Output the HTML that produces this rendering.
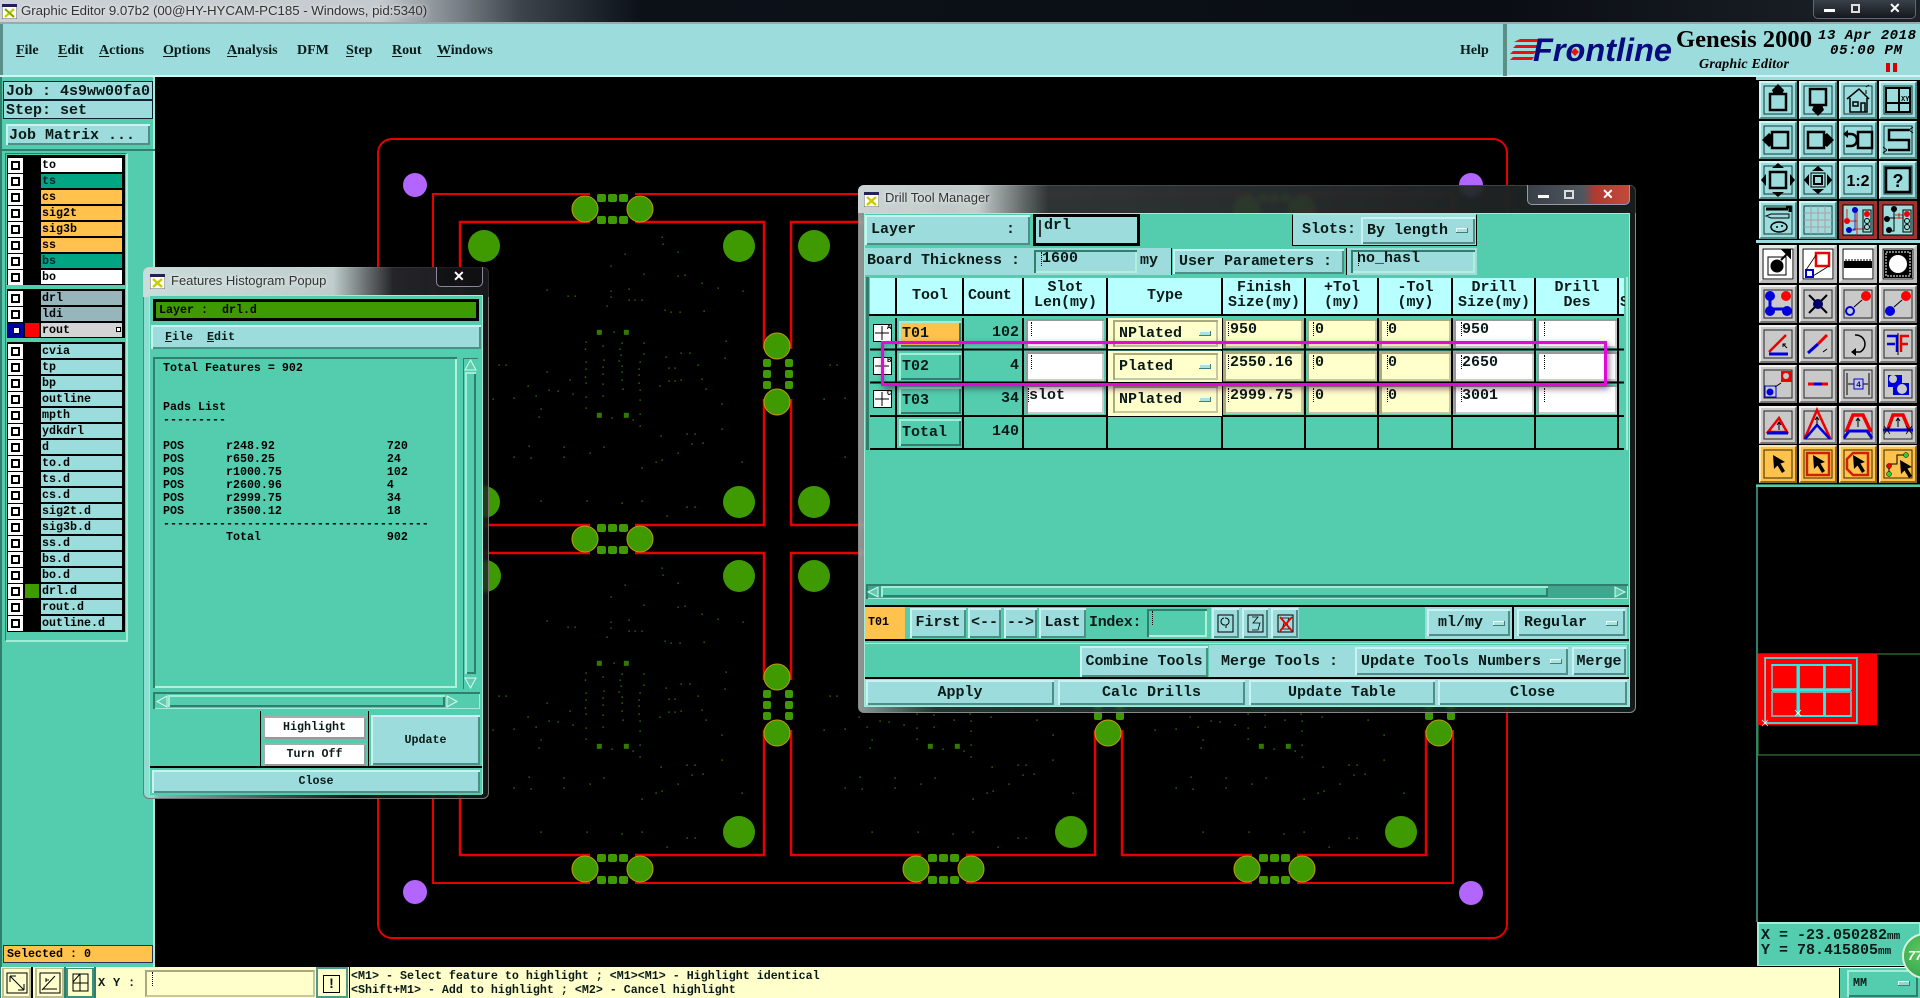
<!DOCTYPE html>
<html><head><meta charset="utf-8"><title>Graphic Editor</title>
<style>
html,body{margin:0;padding:0;background:#000;width:1920px;height:998px;overflow:hidden}
*,*::after{box-sizing:border-box}
.a{position:absolute;white-space:pre}
body{font:bold 11.67px/14px "Liberation Mono",monospace;color:#0a1a18}
.m{font:bold 15px/16px "Liberation Mono",monospace}
.c{text-align:center}
.t{background:#53cdae}
.l{background:#9ddcdc}
.b{background:#9ddcdc;box-shadow:inset 2px 2px 0 #c9f3f3,inset -2px -2px 0 #4d8f86}
.bt{background:#53cdae;box-shadow:inset 2px 2px 0 #a5ecd8,inset -2px -2px 0 #2f7f6c}
.sink{box-shadow:inset 2px 2px 0 #2f7f6c,inset -2px -2px 0 #b0f0dc}
.i{background:#fff;box-shadow:inset 2px 2px 0 #999,inset -2px -2px 0 #ccc}
.y{background:#ffffcc;box-shadow:inset 2px 2px 0 #aaa980,inset -2px -2px 0 #c8c8a0}
.menu{font:bold 14px/18px "Liberation Serif",serif;top:42px;color:#061a18}
.menu u{text-underline-offset:2px}
.ck{width:15px;height:15px;background:#fff;left:8px}
.ck:after{content:"";position:absolute;left:3px;top:3px;width:9px;height:9px;border:2px solid #000}
.n{left:41px;width:81px;height:14px;padding-left:1px;background:#9ddcdc;line-height:15px;color:#000}
.tg{font:13px/16px "Liberation Sans",sans-serif;color:#333;text-shadow:0 0 5px #fff}
.cur{width:1px;height:14px;border-left:1px dotted #000}
.mb{width:12px;height:5px;background:#a9e4dc;box-shadow:inset -1px -1px 0 #3f7f78,inset 1px 1px 0 #eaffff}
</style></head><body>

<!-- PCB canvas -->
<svg class="a" style="left:0;top:0" width="1920" height="998" viewBox="0 0 1920 998">
<defs>
<g id="dots" fill="#3f9900" stroke="#000" stroke-width="1" opacity=".8" transform="translate(360 120) scale(.3333)">
<path d="M904 349h5v5h-5zM907 370h5v5h-5zM952 394h5v5h-5zM793 400h5v5h-5zM751 436h5v5h-5zM850 460h5v5h-5zM952 466h5v5h-5zM973 463h5v5h-5zM1024 487h5v5h-5zM1072 502h5v5h-5zM1147 511h5v5h-5zM559 508h5v5h-5zM622 526h5v5h-5zM643 526h5v5h-5zM805 505h5v5h-5zM751 511h5v5h-5zM751 529h5v5h-5zM805 538h5v5h-5zM823 538h5v5h-5zM844 538h5v5h-5zM739 556h5v5h-5zM913 568h5v5h-5zM931 574h5v5h-5zM958 574h5v5h-5zM1030 571h5v5h-5zM415 733h5v5h-5zM436 733h5v5h-5zM397 835h5v5h-5zM460 832h5v5h-5zM502 796h5v5h-5zM526 826h5v5h-5zM541 865h5v5h-5zM535 889h5v5h-5zM559 754h5v5h-5zM565 808h5v5h-5zM592 811h5v5h-5zM628 778h5v5h-5zM637 820h5v5h-5zM676 664h5v5h-5zM674 685h5v5h-5zM676 724h5v5h-5zM676 745h5v5h-5zM674 769h5v5h-5zM676 787h5v5h-5zM676 829h5v5h-5zM676 862h5v5h-5zM727 676h5v5h-5zM730 718h5v5h-5zM727 739h5v5h-5zM727 760h5v5h-5zM727 790h5v5h-5zM727 826h5v5h-5zM784 667h5v5h-5zM778 685h5v5h-5zM781 703h5v5h-5zM775 721h5v5h-5zM784 736h5v5h-5zM784 754h5v5h-5zM784 778h5v5h-5zM787 805h5v5h-5zM850 667h5v5h-5zM850 700h5v5h-5zM838 724h5v5h-5zM835 745h5v5h-5zM835 763h5v5h-5zM835 787h5v5h-5zM838 808h5v5h-5zM838 838h5v5h-5zM838 880h5v5h-5zM838 916h5v5h-5zM817 898h5v5h-5zM760 634h5v5h-5zM754 892h5v5h-5zM1096 661h5v5h-5zM1093 712h5v5h-5zM916 709h5v5h-5zM961 697h5v5h-5zM988 697h5v5h-5zM925 742h5v5h-5zM943 742h5v5h-5zM1012 733h5v5h-5zM925 781h5v5h-5zM943 781h5v5h-5zM961 778h5v5h-5zM898 796h5v5h-5zM1024 775h5v5h-5zM1036 805h5v5h-5zM1084 850h5v5h-5zM1084 925h5v5h-5zM901 946h5v5h-5zM979 940h5v5h-5zM1003 940h5v5h-5zM994 970h5v5h-5zM1027 967h5v5h-5zM952 997h5v5h-5zM904 1018h5v5h-5zM886 1024h5v5h-5zM844 1042h5v5h-5zM505 976h5v5h-5zM610 979h5v5h-5zM730 979h5v5h-5zM688 997h5v5h-5zM460 1009h5v5h-5zM511 1012h5v5h-5zM610 1009h5v5h-5zM1144 1024h5v5h-5zM541 1141h5v5h-5zM679 1141h5v5h-5zM784 1147h5v5h-5zM844 1141h5v5h-5zM979 1159h5v5h-5zM1003 1159h5v5h-5zM919 1186h5v5h-5zM710 629h16v16h-16zM791 629h16v16h-16zM710 878h16v16h-16zM791 878h16v16h-16z"/>
</g>
<g id="ht">
<g fill="#3f9900">
<rect x="-10" y="-15" width="9" height="8" rx="2"/><rect x="1" y="-15" width="9" height="8" rx="2"/><rect x="12" y="-15" width="9" height="8" rx="2"/>
<rect x="-10" y="7" width="9" height="8" rx="2"/><rect x="1" y="7" width="9" height="8" rx="2"/><rect x="12" y="7" width="9" height="8" rx="2"/>
<circle cx="-22" cy="0" r="13" stroke="#c49a10" stroke-width="1"/><circle cx="33" cy="0" r="13" stroke="#c49a10" stroke-width="1"/>
</g>
</g>
<g id="vt">
<g fill="#3f9900">
<rect x="-14" y="-9" width="8" height="8" rx="2"/><rect x="-14" y="2" width="8" height="8" rx="2"/><rect x="-14" y="13" width="8" height="8" rx="2"/>
<rect x="8" y="-9" width="8" height="8" rx="2"/><rect x="8" y="2" width="8" height="8" rx="2"/><rect x="8" y="13" width="8" height="8" rx="2"/>
<circle cx="0" cy="-22" r="13" stroke="#c49a10" stroke-width="1"/><circle cx="0" cy="34" r="13" stroke="#c49a10" stroke-width="1"/>
</g>
</g>
</defs>
<use href="#dots"/><use href="#dots" x="331"/><use href="#dots" x="662"/>
<use href="#dots" y="331"/><use href="#dots" x="331" y="331"/><use href="#dots" x="662" y="331"/>
<g fill="none" stroke="#e60000">
<rect x="378" y="139" width="1129" height="799" rx="14" stroke-width="2"/>
<path stroke-width="2" d="M433 194V883H1453V194z"/>
<g stroke-width="2.5">
<path d="M460 525V222H764V525zM791 525V222H1095V525zM1122 525V222H1426V525z"/>
<path d="M460 553V855H764V553zM791 553V855H1095V553zM1122 553V855H1426V553z"/>
</g>
</g>
<g fill="#000">
<rect x="590" y="190" width="45" height="36"/><rect x="590" y="520" width="45" height="38"/><rect x="590" y="851" width="45" height="36"/>
<rect x="921" y="190" width="45" height="36"/><rect x="921" y="520" width="45" height="38"/><rect x="921" y="851" width="45" height="36"/>
<rect x="1252" y="190" width="45" height="36"/><rect x="1252" y="520" width="45" height="38"/><rect x="1252" y="851" width="45" height="36"/>
<rect x="759" y="349" width="37" height="50"/><rect x="759" y="680" width="37" height="50"/>
<rect x="1090" y="349" width="37" height="50"/><rect x="1090" y="680" width="37" height="50"/>
<rect x="1421" y="680" width="37" height="50"/><rect x="1421" y="349" width="37" height="50"/>
</g>
<use href="#ht" x="607" y="209"/><use href="#ht" x="607" y="539"/><use href="#ht" x="607" y="869"/>
<use href="#ht" x="938" y="209"/><use href="#ht" x="938" y="539"/><use href="#ht" x="938" y="869"/>
<use href="#ht" x="1269" y="209"/><use href="#ht" x="1269" y="539"/><use href="#ht" x="1269" y="869"/>
<use href="#vt" x="777" y="368"/><use href="#vt" x="777" y="699"/>
<use href="#vt" x="1108" y="368"/><use href="#vt" x="1108" y="699"/>
<use href="#vt" x="1439" y="368"/><use href="#vt" x="1439" y="699"/>
<g fill="#3f9900">
<circle cx="484" cy="246" r="16"/><circle cx="739" cy="246" r="16"/><circle cx="484" cy="502" r="16"/><circle cx="739" cy="502" r="16"/>
<circle cx="814" cy="246" r="16"/><circle cx="1070" cy="246" r="16"/><circle cx="814" cy="502" r="16"/><circle cx="1070" cy="502" r="16"/>
<circle cx="1145" cy="246" r="16"/><circle cx="1400" cy="246" r="16"/><circle cx="1145" cy="502" r="16"/><circle cx="1400" cy="502" r="16"/>
<circle cx="485" cy="576" r="16"/><circle cx="739" cy="576" r="16"/><circle cx="739" cy="832" r="16"/>
<circle cx="814" cy="576" r="16"/><circle cx="1071" cy="576" r="16"/><circle cx="1071" cy="832" r="16"/>
<circle cx="1145" cy="576" r="16"/><circle cx="1401" cy="576" r="16"/><circle cx="1401" cy="832" r="16"/>
</g>
<g fill="#b266ff"><circle cx="415" cy="185" r="12"/><circle cx="415" cy="892" r="12"/><circle cx="1471" cy="185" r="12"/><circle cx="1471" cy="893" r="12"/></g>
</svg>

<!-- Title bar -->
<div class="a" style="left:0;top:0;width:1920px;height:22px;background:linear-gradient(90deg,#ccd2d6 0,#c4cace 380px,#3c444c 520px,#0c1118 640px,#0a0e14 1500px,#1c2228 1900px)"></div>
<svg class="a" style="left:2px;top:4px" width="15" height="15"><rect width="15" height="15" fill="#fff" stroke="#555"/><rect width="15" height="3" fill="#225"/><path d="M3 5l9 8M12 5l-9 8" stroke="#cc0" stroke-width="2.5"/><path d="M3 5l9 8" stroke="#393" stroke-width="1"/></svg>
<div class="a tg" style="left:21px;top:3px;font-size:13.3px;letter-spacing:-.05px">Graphic Editor 9.07b2 (00@HY-HYCAM-PC185 - Windows, pid:5340)</div>
<div class="a" style="left:1813px;top:0;width:103px;height:19px;border:1px solid #667;border-top:0;border-radius:0 0 5px 5px;background:linear-gradient(#3a4048,#14181e)"></div>
<div class="a" style="left:1824px;top:9px;width:11px;height:3px;background:#fff"></div>
<div class="a" style="left:1851px;top:4px;width:9px;height:9px;border:2px solid #ddd"></div>
<div class="a" style="left:1889px;top:-1px;font:bold 14px/18px 'Liberation Sans',sans-serif;color:#fff">✕</div>

<!-- Menu bar -->
<div class="a l" style="left:0;top:22px;width:1920px;height:55px;border-top:2px solid #9aa;box-shadow:inset 3px 0 0 #5a8f8a;border-bottom:2px solid #d0f5f5"></div>
<div class="a menu" style="left:16px"><u>F</u>ile</div>
<div class="a menu" style="left:58px"><u>E</u>dit</div>
<div class="a menu" style="left:99px"><u>A</u>ctions</div>
<div class="a menu" style="left:163px"><u>O</u>ptions</div>
<div class="a menu" style="left:227px"><u>A</u>nalysis</div>
<div class="a menu" style="left:297px">DFM</div>
<div class="a menu" style="left:346px"><u>S</u>tep</div>
<div class="a menu" style="left:392px"><u>R</u>out</div>
<div class="a menu" style="left:437px"><u>W</u>indows</div>
<div class="a menu" style="left:1460px">Help</div>
<div class="a" style="left:1503px;top:24px;width:4px;height:52px;background:#5a8f8a"></div>

<!-- Logo -->
<svg class="a" style="left:1508px;top:24px" width="412" height="52">
<g fill="#e81010"><path d="M12 15h20l-2 3H6zM8 21h22l-2 3H5zM5 27h23l-2 3H2zM5 33h21l-2 3H2z"/></g>
<text x="25" y="37" font-family="Liberation Sans" font-weight="bold" font-style="italic" font-size="32" fill="#0a0a80" textLength="139" lengthAdjust="spacingAndGlyphs">Frontline</text>
<path d="M67 24l4 4-4 4-4-4z" fill="#e81010"/>
<text x="168" y="23" font-family="Liberation Serif" font-weight="bold" font-size="24" fill="#000" textLength="136" lengthAdjust="spacingAndGlyphs">Genesis 2000</text>
<text x="191" y="44" font-family="Liberation Serif" font-weight="bold" font-style="italic" font-size="14" fill="#000" textLength="90">Graphic Editor</text>
<text x="310" y="15" font-family="Liberation Mono" font-weight="bold" font-style="italic" font-size="14" fill="#000" textLength="98">13 Apr 2018</text>
<text x="322" y="30" font-family="Liberation Mono" font-weight="bold" font-style="italic" font-size="14" fill="#000" textLength="72">05:00 PM</text>
<rect x="378" y="39" width="4" height="9" fill="#d00"/><rect x="385" y="39" width="4" height="9" fill="#d00"/>
</svg>

<!-- Left panel -->
<div class="a t" style="left:0;top:77px;width:155px;height:890px;box-shadow:inset 2px 0 0 #2f7f6c,inset -2px 0 0 #a5ecd8"></div>
<div class="a l m" style="left:3px;top:81px;width:150px;height:19px;border:1px solid #123;border-width:1px;padding-left:2px;line-height:19px">Job : 4s9ww00fa0</div>
<div class="a l m" style="left:3px;top:100px;width:150px;height:19px;border:1px solid #123;padding-left:2px;line-height:19px">Step: set</div>
<div class="a b m" style="left:6px;top:124px;width:144px;height:21px;padding-left:3px;line-height:23px">Job Matrix ...</div>
<div class="a" style="left:0;top:149px;width:155px;height:2px;background:#2f7f6c"></div>
<div class="a" style="left:5px;top:153px;width:123px;height:489px;border:1px solid #2f7f6c;border-right:2px solid #a5ecd8;border-bottom:2px solid #a5ecd8"></div>
<div class="a" style="left:7px;top:155px;width:118px;height:477px;background:#000"></div>
<div class="a t" style="left:7px;top:285px;width:118px;height:4px"></div>
<div class="a t" style="left:7px;top:338px;width:118px;height:4px"></div>

<div class="a ck" style="top:158px"></div><div class="a n" style="top:158px;background:#fff">to</div>
<div class="a ck" style="top:174px"></div><div class="a n" style="top:174px;background:#00a583;color:#023">ts</div>
<div class="a ck" style="top:190px"></div><div class="a n" style="top:190px;background:#ffc34d">cs</div>
<div class="a ck" style="top:206px"></div><div class="a n" style="top:206px;background:#ffc34d">sig2t</div>
<div class="a ck" style="top:222px"></div><div class="a n" style="top:222px;background:#ffc34d">sig3b</div>
<div class="a ck" style="top:238px"></div><div class="a n" style="top:238px;background:#ffc34d">ss</div>
<div class="a ck" style="top:254px"></div><div class="a n" style="top:254px;background:#00a583;color:#023">bs</div>
<div class="a ck" style="top:270px"></div><div class="a n" style="top:270px;background:#fff">bo</div>
<div class="a ck" style="top:291px"></div><div class="a n" style="top:291px;background:#97b6bc">drl</div>
<div class="a ck" style="top:307px"></div><div class="a n" style="top:307px;background:#97b6bc">ldi</div>
<div class="a" style="left:8px;top:323px;width:15px;height:15px;background:#0000a0"></div>
<div class="a" style="left:13px;top:327px;width:7px;height:7px;background:#fff;border:1px solid #000"></div>
<div class="a" style="left:25px;top:323px;width:14px;height:14px;background:#f00"></div>
<div class="a n" style="top:323px;background:#d4d4d4">rout</div>
<div class="a" style="left:116px;top:327px;width:5px;height:5px;border:1px solid #000;background:#fff"></div>
<div class="a ck" style="top:344px"></div><div class="a n" style="top:344px">cvia</div>
<div class="a ck" style="top:360px"></div><div class="a n" style="top:360px">tp</div>
<div class="a ck" style="top:376px"></div><div class="a n" style="top:376px">bp</div>
<div class="a ck" style="top:392px"></div><div class="a n" style="top:392px">outline</div>
<div class="a ck" style="top:408px"></div><div class="a n" style="top:408px">mpth</div>
<div class="a ck" style="top:424px"></div><div class="a n" style="top:424px">ydkdrl</div>
<div class="a ck" style="top:440px"></div><div class="a n" style="top:440px">d</div>
<div class="a ck" style="top:456px"></div><div class="a n" style="top:456px">to.d</div>
<div class="a ck" style="top:472px"></div><div class="a n" style="top:472px">ts.d</div>
<div class="a ck" style="top:488px"></div><div class="a n" style="top:488px">cs.d</div>
<div class="a ck" style="top:504px"></div><div class="a n" style="top:504px">sig2t.d</div>
<div class="a ck" style="top:520px"></div><div class="a n" style="top:520px">sig3b.d</div>
<div class="a ck" style="top:536px"></div><div class="a n" style="top:536px">ss.d</div>
<div class="a ck" style="top:552px"></div><div class="a n" style="top:552px">bs.d</div>
<div class="a ck" style="top:568px"></div><div class="a n" style="top:568px">bo.d</div>
<div class="a ck" style="top:584px"></div><div class="a" style="left:25px;top:584px;width:14px;height:14px;background:#3f9900"></div><div class="a n" style="top:584px">drl.d</div>
<div class="a ck" style="top:600px"></div><div class="a n" style="top:600px">rout.d</div>
<div class="a ck" style="top:616px"></div><div class="a n" style="top:616px">outline.d</div>

<div class="a" style="left:3px;top:945px;width:150px;height:18px;background:#ffc34d;border:1px solid #235;line-height:17px;padding-left:3px;color:#000">Selected : 0</div>

<!-- Bottom bar -->
<div class="a" style="left:0;top:967px;width:1920px;height:31px;background:#ffffcc"></div>
<div class="a" style="left:0;top:967px;width:1px;height:31px;background:#2f7f6c"></div>
<div class="a" style="left:31px;top:967px;width:2px;height:31px;background:#000"></div>
<div class="a" style="left:64px;top:967px;width:2px;height:31px;background:#2f7f6c"></div>
<div class="a" style="left:94px;top:967px;width:2px;height:31px;background:#2f7f6c"></div>
<svg class="a" style="left:2px;top:968px" width="92" height="30" fill="none" stroke="#000">
<rect x="1" y="0" width="27" height="29" stroke="#bdbd90" stroke-width="2"/><rect x="5" y="5" width="20" height="20"/><path d="M8 8l14 14M8 8v6M8 8h6M22 22v-6M22 22h-6"/>
<rect x="34" y="0" width="27" height="29" stroke="#bdbd90" stroke-width="2"/><rect x="38" y="5" width="20" height="20"/><path d="M40 22l13-14M41 21h14M44 12h3M44 10v4"/>
<rect x="65" y="0" width="26" height="29" stroke="#3f8f7c" stroke-width="2" /><rect x="71" y="6" width="15" height="17"/><path d="M71 15h15M78 6v17M71 14l7-8"/>
</svg>
<div class="a" style="left:98px;top:976px;font-size:12px;letter-spacing:.3px">X Y :</div>
<div class="a" style="left:145px;top:970px;width:170px;height:27px;border:2px solid #aaa980;border-right-color:#c8c8a0;border-bottom-color:#c8c8a0"></div>
<div class="a cur" style="left:152px;top:972px"></div>
<div class="a" style="left:316px;top:967px;width:32px;height:31px;background:#ffffcc;border:2px solid #4d9a88"></div>
<div class="a" style="left:323px;top:975px;width:17px;height:18px;border:1.5px solid #000;text-align:center;font:bold 14px/15px 'Liberation Sans',sans-serif">!</div>
<div class="a" style="left:349px;top:967px;width:1px;height:31px;background:#000"></div>
<div class="a" style="left:351px;top:970px;line-height:13.5px">&lt;M1&gt; - Select feature to highlight ; &lt;M1&gt;&lt;M1&gt; - Highlight identical
&lt;Shift+M1&gt; - Add to highlight ; &lt;M2&gt; - Cancel highlight</div>
<div class="a t" style="left:1839px;top:968px;width:81px;height:30px;border-left:1px solid #000"></div>
<div class="a bt" style="left:1847px;top:970px;width:71px;height:27px;padding-left:6px;line-height:27px;font-size:11.67px">MM</div>
<div class="a mb" style="left:1898px;top:981px;background:#8fd8d0"></div>

<!-- Right tool panel -->
<div class="a l" style="left:1756px;top:77px;width:164px;height:3px"></div>
<div class="a l" style="left:1756px;top:240px;width:164px;height:3px"></div>
<svg class="a" style="left:1757px;top:79px" width="163" height="410" viewBox="1757 79 163 410">
<defs>
<g id="tb"><rect width="38" height="38" fill="#9ddcdc"/><path d="M0 38V0H38l-2 2H2V36z" fill="#d0f5f5"/><path d="M38 0V38H0l2-2H36V2z" fill="#4f8a88"/><rect x="5" y="5" width="28" height="28" fill="none" stroke="#0a3a3a"/></g>
<g id="wb"><rect width="38" height="38" fill="#fff"/><path d="M0 38V0H38l-2 3H3V35z" fill="#e8e8e8"/><path d="M38 0V38H0l3-3H35V3z" fill="#bbb"/><rect x="4" y="4" width="30" height="30" fill="#fff" stroke="#000"/></g>
<g id="gb"><rect width="38" height="38" fill="#c9c9c9"/><path d="M0 38V0H38l-2 2H2V36z" fill="#f0f0f0"/><path d="M38 0V38H0l2-2H36V2z" fill="#767676"/><rect x="5" y="5" width="28" height="28" fill="none" stroke="#222"/></g>
<g id="ob"><rect width="38" height="38" fill="#ffc34d"/><path d="M0 38V0H38l-2 2H2V36z" fill="#ffe6a8"/><path d="M38 0V38H0l2-2H36V2z" fill="#8a6a20"/><rect x="5" y="5" width="28" height="28" fill="none" stroke="#3a2a00"/></g>
<path id="arr" d="M0 0L1 14L4.500 10.500L9 18L12 16L7.500 8.500L12 7z" fill="#000"/>
</defs>

<!-- teal rows -->
<g transform="translate(1759 81)"><use href="#tb"/><rect x="11" y="13" width="16" height="16" fill="none" stroke="#000" stroke-width="2.5"/><path d="M19 3l6 6-2 5H15l-2-5z" fill="#000"/></g>
<g transform="translate(1799 81)"><use href="#tb"/><rect x="11" y="8" width="16" height="16" fill="none" stroke="#000" stroke-width="2.5"/><path d="M19 35l6-6-2-5H15l-2 5z" fill="#000"/></g>
<g transform="translate(1839 81)"><use href="#tb"/><path d="M8 18L20 8l10 10M11 17v14h17V17M14 21h5v4h-5zM22 22h4v9h-4z" fill="none" stroke="#000" stroke-width="1.5"/><path d="M27 6l3-2M27 9v4" stroke="#000"/></g>
<g transform="translate(1879 81)"><use href="#tb"/><path d="M7 7h24v24H7zM7 22h24M20 7v24" fill="none" stroke="#000" stroke-width="2"/><text x="22" y="20" font-size="7" fill="#000">XY</text></g>

<g transform="translate(1759 121)"><use href="#tb"/><rect x="13" y="11" width="16" height="16" fill="none" stroke="#000" stroke-width="2.5"/><path d="M3 19l7-7 4 3v8l-4 3z" fill="#000"/></g>
<g transform="translate(1799 121)"><use href="#tb"/><rect x="9" y="11" width="16" height="16" fill="none" stroke="#000" stroke-width="2.5"/><path d="M35 19l-7-7-4 3v8l4 3z" fill="#000"/></g>
<g transform="translate(1839 121)"><use href="#tb"/><rect x="19" y="11" width="14" height="16" fill="none" stroke="#000" stroke-width="2.5"/><path d="M6 13h6a5 5 0 0 1 0 12H7" fill="none" stroke="#000" stroke-width="2.5"/><path d="M4 13l5-4v8z" fill="#000"/></g>
<g transform="translate(1879 121)"><use href="#tb"/><path d="M30 9H10v10h20v10H9" fill="none" stroke="#000" stroke-width="2.5"/><path d="M30 9l4-3M30 9l4 3M8 29l-4-3M8 29l-4 3" stroke="#000"/></g>

<g transform="translate(1759 161)"><use href="#tb"/><rect x="11" y="11" width="16" height="16" fill="none" stroke="#000" stroke-width="2.5"/><path d="M19 2l6 5H13zM19 36l6-5H13zM2 19l5-6v12zM36 19l-5-6v12z" fill="#000"/></g>
<g transform="translate(1799 161)"><use href="#tb"/><rect x="15" y="15" width="8" height="8" fill="none" stroke="#000" stroke-width="2"/><path d="M12 12h14v14H12z" fill="none" stroke="#000"/><path d="M19 5l6 5H13zM19 33l6-5H13zM5 19l5-6v12zM33 19l-5-6v12z" fill="#000"/></g>
<g transform="translate(1839 161)"><use href="#tb"/><text x="19" y="25" text-anchor="middle" font-family="Liberation Sans" font-weight="bold" font-size="16" fill="#000">1:2</text></g>
<g transform="translate(1879 161)"><use href="#tb"/><rect x="7" y="7" width="24" height="24" fill="none" stroke="#000" stroke-width="2.5"/><text x="19" y="26" text-anchor="middle" font-family="Liberation Sans" font-weight="bold" font-size="18" fill="#000">?</text></g>

<g transform="translate(1759 201)"><use href="#tb"/><path d="M7 8h22M27 6h4v5" stroke="#000" stroke-width="3" fill="none"/><path d="M7 15l5-2h18v4H12z" fill="none" stroke="#000"/><ellipse cx="20" cy="26" rx="8" ry="5" fill="none" stroke="#000" stroke-width="1.5"/><circle cx="18" cy="26" r="1" /><circle cx="23" cy="25" r="1"/></g>
<g transform="translate(1799 201)"><use href="#tb"/><path d="M12 5v28M19 5v28M26 5v28M5 12h28M5 19h28M5 26h28" stroke="#b39ca2"/></g>
<g transform="translate(1839 201)"><rect width="38" height="38" fill="#a53030"/><rect x="4" y="4" width="30" height="30" fill="#9ddcdc" stroke="#000"/><path d="M8 8v12h10v6M8 20M18 10v24M14 28h12" fill="none" stroke="#e02020"/><path d="M16 9v20h-6" fill="none" stroke="#22c"/><circle cx="16" cy="9" r="3" fill="#00c"/><circle cx="10" cy="29" r="3" fill="#00c"/><circle cx="8" cy="20" r="3" fill="#e00"/><rect x="24" y="9" width="8" height="22" fill="none" stroke="#000"/><circle cx="28" cy="13" r="3" fill="#e00"/><circle cx="28" cy="20" r="2.5" fill="none" stroke="#000"/><circle cx="28" cy="26" r="2.5" fill="none" stroke="#000"/></g>
<g transform="translate(1879 201)"><rect width="38" height="38" fill="#a53030"/><rect x="4" y="4" width="30" height="30" fill="#9ddcdc" stroke="#000"/><path d="M15 8v22h-5M10 17h14" fill="none" stroke="#000"/><path d="M16 14h8M16 17h8M20 12v6" stroke="#e02020"/><circle cx="15" cy="8" r="3" fill="#000"/><circle cx="10" cy="29" r="3" fill="#000"/><circle cx="8" cy="18" r="3" fill="#000"/><rect x="24" y="9" width="8" height="22" fill="none" stroke="#000"/><circle cx="28" cy="13" r="3" fill="#e00"/><circle cx="28" cy="20" r="2.5" fill="none" stroke="#000"/><circle cx="28" cy="26" r="2.5" fill="none" stroke="#000"/></g>

<!-- white row -->
<g transform="translate(1759 245)"><use href="#wb"/><rect x="9" y="12" width="18" height="18" fill="none" stroke="#000"/><circle cx="18" cy="21" r="6.5" fill="#000"/><path d="M22 15l8-8M24 5h7v7z" stroke="#000" stroke-width="2"/></g>
<g transform="translate(1799 245)"><use href="#wb"/><rect x="17" y="8" width="13" height="13" fill="none" stroke="#e00" stroke-width="2.5"/><rect x="7" y="25" width="7" height="7" fill="none" stroke="#00c" stroke-width="2"/><path d="M7 25L17 10M14 31L30 21" stroke="#000" stroke-width=".8"/></g>
<g transform="translate(1839 245)"><use href="#wb"/><rect x="5" y="16" width="28" height="7" fill="#000"/><path d="M7 14v3M10 14v3M13 14v3M16 14v3M19 14v3M22 14v3M25 14v3M28 14v3M31 14v3" stroke="#000"/></g>
<g transform="translate(1879 245)"><use href="#wb"/><rect x="5" y="5" width="28" height="28" fill="#000"/><circle cx="19" cy="19" r="9" fill="#fff"/><rect x="7" y="7" width="24" height="24" fill="none" stroke="#fff" stroke-dasharray="2 1"/></g>

<!-- gray rows -->
<g transform="translate(1759 285)"><use href="#gb"/><path d="M11 10v14h18" stroke="#00d" stroke-width="3" fill="none"/><circle cx="11" cy="11" r="5" fill="#00d"/><circle cx="11" cy="26" r="5" fill="#00d"/><circle cx="28" cy="26" r="5" fill="#00d"/><circle cx="27" cy="11" r="5" fill="#f00"/></g>
<g transform="translate(1799 285)"><use href="#gb"/><path d="M10 10l18 18M28 10L10 28" stroke="#000" stroke-width="2"/><circle cx="19" cy="19" r="5" fill="#006"/></g>
<g transform="translate(1839 285)"><use href="#gb"/><circle cx="11" cy="26" r="4" fill="none" stroke="#00d" stroke-width="2"/><circle cx="27" cy="11" r="5" fill="#f00"/><path d="M15 22l8-7" stroke="#000"/></g>
<g transform="translate(1879 285)"><use href="#gb"/><circle cx="11" cy="26" r="5" fill="#00d"/><circle cx="27" cy="11" r="5" fill="#f00"/><path d="M15 22l8-7" stroke="#000"/></g>

<g transform="translate(1759 325)"><use href="#gb"/><path d="M10 27L27 10" stroke="#e00" stroke-width="2.5"/><path d="M10 29h19" stroke="#00d" stroke-width="3"/><path d="M28 23l-4-4m0 3v-3h3" stroke="#000" fill="none"/></g>
<g transform="translate(1799 325)"><use href="#gb"/><path d="M9 28l10-9" stroke="#00d" stroke-width="3"/><path d="M19 19l9-9" stroke="#e00" stroke-width="3"/><path d="M28 24l-4 3" stroke="#000"/></g>
<g transform="translate(1839 325)"><use href="#gb"/><path d="M16 10a9 9 0 0 1 5 17h-6" fill="none" stroke="#000" stroke-width="1.5"/><path d="M12 27l5-4v8z" fill="#000"/></g>
<g transform="translate(1879 325)"><use href="#gb"/><path d="M8 11h10v16M8 19h8" fill="none" stroke="#00d" stroke-width="2.5"/><path d="M30 11H22v16M22 19h7" fill="none" stroke="#e00" stroke-width="2.5" transform="translate(0 0)"/><path d="M19 8v22" stroke="#000"/></g>

<g transform="translate(1759 365)"><use href="#gb"/><rect x="6" y="21" width="11" height="11" fill="none" stroke="#00d"/><circle cx="11" cy="27" r="3.5" fill="#00d"/><rect x="22" y="6" width="11" height="11" fill="#e00"/><circle cx="27" cy="11" r="3" fill="#c9c9c9"/><path d="M16 22l6-4" stroke="#000"/></g>
<g transform="translate(1799 365)"><use href="#gb"/><path d="M9 19h20" stroke="#e00" stroke-width="3"/><path d="M15 19h8" stroke="#00d" stroke-width="3"/></g>
<g transform="translate(1839 365)"><use href="#gb"/><path d="M8 8v22M30 8v22M9 19h20" stroke="#000" fill="none"/><rect x="15" y="14" width="9" height="10" fill="#c9c9c9" stroke="#00d"/><text x="19.5" y="22" text-anchor="middle" font-size="8" fill="#00d">4</text></g>
<g transform="translate(1879 365)"><use href="#gb"/><path d="M9 10h14v8h7v12H14v-8H9z" fill="#00d"/><circle cx="14" cy="14" r="4" fill="#c9c9c9"/><circle cx="23" cy="24" r="5" fill="#c9c9c9"/></g>

<g transform="translate(1759 406)"><use href="#gb"/><path d="M9 26L20 12l8 14z" fill="none" stroke="#e00" stroke-width="2.5"/><path d="M8 27h21" stroke="#00d" stroke-width="3"/><path d="M20 17v7M18 19l2-3 2 3" stroke="#000" fill="none"/></g>
<g transform="translate(1799 406)"><use href="#gb"/><path d="M6 32L18 4l13 28" fill="none" stroke="#e00" stroke-width="2.5"/><path d="M6 33l12-14 13 14" fill="none" stroke="#00d" stroke-width="2.5"/><path d="M18 12v7M16 14l2-3 2 3" stroke="#000" fill="none"/></g>
<g transform="translate(1839 406)"><use href="#gb"/><path d="M7 26L14 9h10l8 17" fill="none" stroke="#e00" stroke-width="3.5"/><path d="M5 32l5-7h18l5 7" fill="none" stroke="#00d" stroke-width="3"/><path d="M19 13v8M17 15l2-3 2 3" stroke="#000" fill="none"/></g>
<g transform="translate(1879 406)"><use href="#gb"/><path d="M9 23L14 9h10l6 14" fill="none" stroke="#e00" stroke-width="3.5"/><path d="M4 24h30" stroke="#00d" stroke-width="3"/><path d="M5 20l6 8M11 20l-6 8M27 20l6 8M33 20l-6 8" stroke="#000" stroke-width=".8"/><path d="M19 13v8M17 15l2-3 2 3" stroke="#000" fill="none"/></g>

<!-- orange row -->
<g transform="translate(1759 445)"><use href="#ob"/><use href="#arr" x="14" y="10"/></g>
<g transform="translate(1799 445)"><use href="#ob"/><rect x="8" y="8" width="22" height="22" fill="none" stroke="#d02000" stroke-width="2.500"/><use href="#arr" x="14" y="10"/></g>
<g transform="translate(1839 445)"><use href="#ob"/><path d="M14 8h15v22H14l-6-6V14z" fill="none" stroke="#d02000" stroke-width="2.500"/><use href="#arr" x="14" y="10"/></g>
<g transform="translate(1879 445)"><use href="#ob"/><path d="M10 29V19h8V10h9" fill="none" stroke="#000"/><circle cx="10" cy="21" r="2.5" fill="#e00" stroke="#000" stroke-width=".5"/><circle cx="10" cy="29" r="2.5" fill="#3c3" stroke="#000" stroke-width=".5"/><circle cx="27" cy="10" r="2.5" fill="#3c3" stroke="#000" stroke-width=".5"/><use href="#arr" x="21" y="15"/></g>
</svg>
<div class="a t" style="left:1756px;top:484px;width:164px;height:3px;border-top:1px solid #2f7f6c"></div>

<!-- Thumbnail -->
<svg class="a" style="left:1756px;top:487px" width="164" height="436">
<g transform="translate(-1756 -487)">
<path d="M1757 487v435" stroke="#2f7f6c" stroke-width="2"/>
<path d="M1758 654H1920M1758 755H1920" stroke="#3f8f3f" stroke-width="1"/>
<path d="M1758 654V755" stroke="#3f8f3f"/>
<rect x="1758" y="654" width="119" height="71" fill="#f00"/>
<rect x="1765" y="658" width="92" height="65" fill="none" stroke="#9a9a9a" stroke-width="2"/>
<rect x="1765.5" y="658" width="91" height="65" fill="none" stroke="#2ee" stroke-width="1"/>
<g fill="none" stroke="#9a9a9a" stroke-width="2"><rect x="1772" y="665" width="26" height="24"/><rect x="1799" y="665" width="25" height="24"/><rect x="1825" y="665" width="26" height="24"/><rect x="1772" y="692" width="26" height="24"/><rect x="1799" y="692" width="25" height="24"/><rect x="1825" y="692" width="26" height="24"/></g>
<g fill="none" stroke="#2ee" stroke-width="2"><path d="M1772 665h79M1772 690h79M1798 665v51M1824 665v51M1825 692v24h26M1799 716h25"/></g>
<path d="M1798 665v51" stroke="#2ee" stroke-width="3"/>
<path d="M1762 720l6 6M1768 720l-6 6M1795 710l6 6M1801 710l-6 6" stroke="#fff" stroke-width=".8" fill="none"/>
</g>
</svg>

<!-- Coords -->
<div class="a t" style="left:1757px;top:922px;width:163px;height:44px;box-shadow:inset 2px 2px 0 #a5ecd8,inset -1px -1px 0 #a5ecd8"></div>
<div class="a m" style="left:1761px;top:928px">X = -23.050282<span style="font-size:11px">mm</span></div>
<div class="a m" style="left:1761px;top:943px">Y = 78.415805<span style="font-size:11px">mm</span></div>
<div class="a" style="left:1902px;top:933px;width:46px;height:46px;border-radius:50%;background:radial-gradient(circle at 40% 40%,#5cc85c,#2c9a4c);border:2px solid #d8f0d8"></div>
<div class="a" style="left:1908px;top:948px;color:#fff;font:italic bold 13px/16px 'Liberation Sans',sans-serif">77</div>

<!-- Features Histogram Popup -->
<div class="a" style="left:143px;top:267px;width:346px;height:532px;border:1px solid #777;border-radius:6px 6px 6px 6px;background:linear-gradient(90deg,rgba(150,225,215,.85) 0,rgba(150,225,215,.85) 8px,rgba(30,30,30,.75) 60%,rgba(30,30,30,.75) 100%);backdrop-filter:blur(2px)"></div>
<div class="a" style="left:143px;top:267px;width:346px;height:30px;border-radius:6px 6px 0 0;background:linear-gradient(90deg,rgba(205,220,218,.95) 0,rgba(205,220,218,.92) 190px,rgba(40,40,44,.85) 250px,rgba(25,25,30,.8) 100%)"></div>
<svg class="a" style="left:150px;top:274px" width="15" height="15"><rect width="15" height="15" fill="#fff" stroke="#666"/><rect width="15" height="3" fill="#225"/><path d="M3 5l9 8M12 5l-9 8" stroke="#cc0" stroke-width="2.5"/></svg>
<div class="a tg" style="left:171px;top:273px">Features Histogram Popup</div>
<div class="a" style="left:436px;top:267px;width:47px;height:20px;border:1px solid #889;border-top:0;border-radius:0 0 5px 5px;background:rgba(0,0,0,.35)"></div>
<div class="a" style="left:453px;top:267px;font:bold 14px/18px 'Liberation Sans',sans-serif;color:#fff">✕</div>

<div class="a t" style="left:149px;top:295px;width:334px;height:499px;border:1px solid #a5ecd8"></div>
<div class="a" style="left:153px;top:299px;width:326px;height:22px;background:#3f9900;border:3px solid #000;line-height:16px;padding-left:3px;color:#000">Layer :  drl.d</div>
<div class="a b" style="left:151px;top:325px;width:330px;height:24px"></div>
<div class="a" style="left:165px;top:329px;line-height:16px"><u>F</u>ile  <u>E</u>dit</div>
<div class="a sink" style="left:153px;top:357px;width:304px;height:331px"></div>
<div class="a" style="left:163px;top:362px;line-height:13px;color:#000">Total Features = 902


Pads List
---------

POS      r248.92                720
POS      r650.25                24
POS      r1000.75               102
POS      r2600.96               4
POS      r2999.75               34
POS      r3500.12               18
--------------------------------------
         Total                  902</div>
<div class="a" style="left:463px;top:358px;width:15px;height:331px;background:#53cdae;box-shadow:inset 1px 1px 0 #2f7f6c"></div>
<div class="a bt" style="left:465px;top:372px;width:11px;height:302px"></div>
<svg class="a" style="left:463px;top:358px" width="15" height="332" fill="#6ac8b0" stroke="#cfe"><path d="M7.5 2L13 12H2z"/><path d="M7.5 330L13 320H2z"/></svg>
<div class="a" style="left:153px;top:692px;width:327px;height:17px;background:#53cdae;box-shadow:inset 2px 2px 0 #2f7f6c,inset -1px -1px 0 #a5ecd8"></div>
<div class="a bt" style="left:168px;top:695px;width:277px;height:12px"></div>
<svg class="a" style="left:155px;top:695px" width="304" height="13" fill="#6ac8b0" stroke="#cfe"><path d="M2 6.5L12 1V12z"/><path d="M302 6.5L292 1V12z"/></svg>
<div class="a" style="left:150px;top:711px;width:332px;height:84px;background:#000"></div>
<div class="a t" style="left:150px;top:711px;width:110px;height:55px"></div>
<div class="a t" style="left:261px;top:711px;width:107px;height:55px"></div>
<div class="a c" style="left:263px;top:716px;width:103px;height:23px;background:#fff;box-shadow:inset 2px 2px 0 #aaa,inset -2px -2px 0 #999;line-height:23px">Highlight</div>
<div class="a c" style="left:263px;top:743px;width:103px;height:23px;background:#fff;box-shadow:inset 2px 2px 0 #aaa,inset -2px -2px 0 #999;line-height:23px">Turn Off</div>
<div class="a t" style="left:369px;top:711px;width:113px;height:55px"></div>
<div class="a b c" style="left:371px;top:715px;width:109px;height:50px;line-height:50px">Update</div>
<div class="a t" style="left:150px;top:768px;width:332px;height:27px"></div>
<div class="a b c" style="left:152px;top:770px;width:328px;height:23px;line-height:23px">Close</div>

<!-- Drill Tool Manager -->
<div class="a" style="left:858px;top:185px;width:778px;height:528px;border:1px solid #888;border-radius:6px;background:linear-gradient(90deg,rgba(190,200,200,.75),rgba(60,70,70,.7) 10%,rgba(30,35,35,.75) 100%);backdrop-filter:blur(2px)"></div>
<div class="a" style="left:858px;top:185px;width:778px;height:28px;border-radius:6px 6px 0 0;background:linear-gradient(90deg,rgba(205,215,215,.95) 0,rgba(205,215,215,.92) 120px,rgba(50,55,55,.75) 190px,rgba(25,30,30,.7) 100%)"></div>
<svg class="a" style="left:864px;top:192px" width="15" height="15"><rect width="15" height="15" fill="#fff" stroke="#666"/><rect width="15" height="3" fill="#225"/><path d="M3 5l9 8M12 5l-9 8" stroke="#cc0" stroke-width="2.5"/></svg>
<div class="a tg" style="left:885px;top:190px">Drill Tool Manager</div>
<div class="a" style="left:1527px;top:185px;width:103px;height:20px;border:1px solid #99a;border-top:0;border-radius:0 0 5px 5px;background:linear-gradient(90deg,#3a4048 0,#50565e 55%,#b03a30 66%,#c04a3a 100%)"></div>
<div class="a" style="left:1538px;top:195px;width:11px;height:3px;background:#fff"></div>
<div class="a" style="left:1564px;top:190px;width:10px;height:9px;border:2px solid #ddd"></div>
<div class="a" style="left:1602px;top:185px;font:bold 14px/18px 'Liberation Sans',sans-serif;color:#fff">✕</div>

<div class="a t" style="left:864px;top:213px;width:766px;height:494px;border:1px solid #a5ecd8"></div>
<div class="a b m" style="left:865px;top:215px;width:165px;height:30px;line-height:30px;padding-left:6px">Layer          :</div>
<div class="a l m" style="left:1033px;top:214px;width:107px;height:32px;border:3px solid #000;padding-left:8px;line-height:18px">drl</div>
<div class="a" style="left:1039px;top:220px;width:1px;height:17px;border-left:2px solid #333"></div>
<div class="a l m" style="left:1292px;top:214px;width:185px;height:32px;line-height:30px;padding-left:9px;border:1px solid #000;border-top-color:#a5ecd8">Slots:</div>
<div class="a b m" style="left:1361px;top:217px;width:114px;height:27px;line-height:27px;padding-left:6px">By length</div>
<div class="a mb" style="left:1456px;top:228px"></div>

<div class="a l m" style="left:865px;top:248px;width:307px;height:27px;line-height:26px;padding-left:2px">Board Thickness :</div>
<div class="a m sink" style="left:1034px;top:250px;width:103px;height:23px;padding-left:8px;line-height:18px;background:#9ddcdc">1600</div>
<div class="a m" style="left:1140px;top:253px">my</div>
<div class="a t" style="left:1171px;top:248px;width:1px;height:27px;background:#000"></div>
<div class="a b m" style="left:1173px;top:249px;width:171px;height:25px;line-height:25px;padding-left:6px">User Parameters :</div>
<div class="a" style="left:1346px;top:248px;width:1px;height:27px;background:#000"></div>
<div class="a l" style="left:1347px;top:248px;width:130px;height:27px"></div>
<div class="a m sink" style="left:1351px;top:250px;width:124px;height:23px;padding-left:6px;line-height:18px;background:#9ddcdc">no_hasl</div>
<div class="a cur" style="left:1358px;top:252px"></div><div class="a cur" style="left:1041px;top:252px"></div>

<div class="a" style="left:866px;top:277px;width:3px;height:173px;background:#2f7f6c"></div>
<div class="a" style="left:870px;top:278px;width:754px;height:36px;background:#b8ffff"></div>
<div class="a" style="left:1626px;top:277px;width:2px;height:173px;background:#a5ecd8"></div>
<svg class="a" style="left:866px;top:277px" width="760" height="175">
<g transform="translate(-866 -277)" stroke="#000" stroke-width="2" fill="none">
<path d="M869 315H1624"/>
<path d="M896 278V314M963 278V314M1023 278V314M1107 278V314M1222 278V314M1305 278V314M1378 278V314M1452 278V314M1535 278V314M1618 278V314"/>
<path d="M896 318V450M963 318V450M1023 318V450M1107 318V450M1222 318V450M1305 318V450M1378 318V450M1452 318V450M1535 318V450M1618 318V450"/>
<path d="M870 349.5H1624M870 382.5H1624M870 416H1624M870 449H1624"/>
</g>
</svg>
<div class="a m c" style="left:897px;top:288px;width:66px">Tool</div>
<div class="a m" style="left:968px;top:288px;letter-spacing:-.3px">Count</div>
<div class="a m c" style="left:1024px;top:280px;width:83px;line-height:15px">Slot
Len(my)</div>
<div class="a m c" style="left:1108px;top:288px;width:114px">Type</div>
<div class="a m c" style="left:1223px;top:280px;width:82px;line-height:15px">Finish
Size(my)</div>
<div class="a m c" style="left:1306px;top:280px;width:72px;line-height:15px">+Tol
(my)</div>
<div class="a m c" style="left:1379px;top:280px;width:73px;line-height:15px">-Tol
(my)</div>
<div class="a m c" style="left:1453px;top:280px;width:82px;line-height:15px">Drill
Size(my)</div>
<div class="a m c" style="left:1536px;top:280px;width:82px;line-height:15px">Drill
Des</div>
<div class="a m" style="left:1620px;top:295px;width:5px;overflow:hidden">S</div>

<!-- row cell backgrounds -->
<div class="a" style="left:1108px;top:318px;width:114px;height:31px;background:#ffffcc"></div>
<div class="a" style="left:1108px;top:351px;width:114px;height:31px;background:#ffffcc"></div>
<div class="a" style="left:1108px;top:384px;width:114px;height:32px;background:#ffffcc"></div>

<!-- row 1 -->
<div class="a" style="left:873px;top:324px;width:19px;height:18px;background:#fff;border:1px solid #000"></div>
<div class="a bt m" style="left:899px;top:321px;width:62px;height:26px;background:#ffc34d;line-height:26px;padding-left:3px">T01</div>
<div class="a m" style="left:964px;top:325px;width:55px;text-align:right">102</div>
<div class="a i" style="left:1026px;top:319px;width:78px;height:29px"></div>
<div class="a y m" style="left:1113px;top:320px;width:105px;height:27px;line-height:28px;padding-left:6px">NPlated</div>
<div class="a y m" style="left:1224px;top:319px;width:79px;height:29px;padding-left:6px;line-height:22px">950</div>
<div class="a y m" style="left:1307px;top:319px;width:70px;height:29px;padding-left:8px;line-height:22px">0</div>
<div class="a y m" style="left:1380px;top:319px;width:71px;height:29px;padding-left:8px;line-height:22px">0</div>
<div class="a i m" style="left:1454px;top:319px;width:80px;height:29px;padding-left:8px;line-height:22px">950</div>
<div class="a i" style="left:1537px;top:319px;width:80px;height:29px"></div>
<!-- row 2 -->
<div class="a" style="left:873px;top:357px;width:19px;height:18px;background:#fff;border:1px solid #000"></div>
<div class="a bt m" style="left:899px;top:353px;width:62px;height:27px;line-height:27px;padding-left:3px">T02</div>
<div class="a m" style="left:964px;top:358px;width:55px;text-align:right">4</div>
<div class="a i" style="left:1026px;top:352px;width:78px;height:29px"></div>
<div class="a y m" style="left:1113px;top:353px;width:105px;height:27px;line-height:28px;padding-left:6px">Plated</div>
<div class="a y m" style="left:1224px;top:352px;width:79px;height:29px;padding-left:6px;line-height:22px">2550.16</div>
<div class="a y m" style="left:1307px;top:352px;width:70px;height:29px;padding-left:8px;line-height:22px">0</div>
<div class="a y m" style="left:1380px;top:352px;width:71px;height:29px;padding-left:8px;line-height:22px">0</div>
<div class="a i m" style="left:1454px;top:352px;width:80px;height:29px;padding-left:8px;line-height:22px">2650</div>
<div class="a i" style="left:1537px;top:352px;width:80px;height:29px"></div>
<!-- row 3 -->
<div class="a" style="left:873px;top:390px;width:19px;height:18px;background:#fff;border:1px solid #000"></div>
<div class="a bt m" style="left:899px;top:387px;width:62px;height:27px;line-height:27px;padding-left:3px">T03</div>
<div class="a m" style="left:964px;top:391px;width:55px;text-align:right">34</div>
<div class="a i m" style="left:1026px;top:385px;width:78px;height:29px;padding-left:3px;line-height:22px">slot</div>
<div class="a y m" style="left:1113px;top:386px;width:105px;height:27px;line-height:28px;padding-left:6px">NPlated</div>
<div class="a y m" style="left:1224px;top:385px;width:79px;height:29px;padding-left:6px;line-height:22px">2999.75</div>
<div class="a y m" style="left:1307px;top:385px;width:70px;height:29px;padding-left:8px;line-height:22px">0</div>
<div class="a y m" style="left:1380px;top:385px;width:71px;height:29px;padding-left:8px;line-height:22px">0</div>
<div class="a i m" style="left:1454px;top:385px;width:80px;height:29px;padding-left:8px;line-height:22px">3001</div>
<div class="a i" style="left:1537px;top:385px;width:80px;height:29px"></div>
<!-- total -->
<div class="a bt m" style="left:899px;top:419px;width:62px;height:27px;line-height:27px;padding-left:3px">Total</div>
<div class="a m" style="left:964px;top:424px;width:55px;text-align:right">140</div>

<div class="a mb" style="left:1199px;top:331px"></div><div class="a mb" style="left:1199px;top:364px"></div><div class="a mb" style="left:1199px;top:397px"></div>
<!-- plus boxes & cursors -->
<svg class="a" style="left:873px;top:320px" width="20" height="92" stroke="#000" fill="none"><path d="M9 6v14M2 13h14M9 39v14M2 46h14M9 72v14M2 79h14"/><text x="14" y="9" font-size="7" fill="#000" stroke="none">A</text><text x="14" y="42" font-size="7" fill="#000" stroke="none">B</text><text x="14" y="75" font-size="7" fill="#000" stroke="none">C</text></svg>
<div class="a cur" style="left:1031px;top:322px"></div><div class="a cur" style="left:1031px;top:355px"></div><div class="a cur" style="left:1028px;top:388px"></div>
<div class="a cur" style="left:1228px;top:322px"></div><div class="a cur" style="left:1228px;top:355px"></div><div class="a cur" style="left:1228px;top:388px"></div>
<div class="a cur" style="left:1313px;top:322px"></div><div class="a cur" style="left:1313px;top:355px"></div><div class="a cur" style="left:1313px;top:388px"></div>
<div class="a cur" style="left:1387px;top:322px"></div><div class="a cur" style="left:1387px;top:355px"></div><div class="a cur" style="left:1387px;top:388px"></div>
<div class="a cur" style="left:1461px;top:322px"></div><div class="a cur" style="left:1461px;top:355px"></div><div class="a cur" style="left:1461px;top:388px"></div>
<div class="a cur" style="left:1544px;top:322px"></div><div class="a cur" style="left:1544px;top:355px"></div><div class="a cur" style="left:1544px;top:388px"></div>

<!-- Magenta highlight -->
<div class="a" style="left:881px;top:341px;width:726px;height:45px;border:3px solid #e20ad8;box-shadow:2px 3px 6px rgba(60,20,60,.55),inset 1px 1px 3px rgba(60,20,60,.25)"></div>

<!-- Lower dialog -->
<div class="a" style="left:866px;top:584px;width:762px;height:15px;background:#3fa78e;box-shadow:inset 2px 2px 0 #2f7f6c,inset -1px -1px 0 #a5ecd8"></div>
<div class="a bt" style="left:881px;top:586px;width:667px;height:11px"></div>
<svg class="a" style="left:866px;top:586px" width="762" height="12" fill="#6ac8b0" stroke="#cfe"><path d="M2 6L12 1V11z"/><path d="M759 6L749 1V11z"/></svg>
<div class="a" style="left:865px;top:605px;width:764px;height:2px;background:#000"></div>
<div class="a" style="left:865px;top:605px;width:764px;height:101px"></div>
<div class="a" style="left:865px;top:607px;width:40px;height:32px;background:#ffc34d;line-height:30px;padding-left:3px;color:#000">T01</div>
<div class="a b m c" style="left:910px;top:608px;width:56px;height:30px;line-height:30px">First</div>
<div class="a b m c" style="left:968px;top:608px;width:33px;height:30px;line-height:30px">&lt;--</div>
<div class="a b m c" style="left:1004px;top:608px;width:33px;height:30px;line-height:30px">--&gt;</div>
<div class="a b m c" style="left:1039px;top:608px;width:47px;height:30px;line-height:30px">Last</div>
<div class="a m" style="left:1089px;top:615px;letter-spacing:-.3px">Index:</div>
<div class="a sink" style="left:1147px;top:609px;width:60px;height:28px"></div>
<div class="a cur" style="left:1152px;top:611px"></div>
<div class="a l" style="left:1211px;top:607px;width:88px;height:32px"></div>
<div class="a b" style="left:1212px;top:608px;width:27px;height:30px"></div>
<div class="a b" style="left:1242px;top:608px;width:26px;height:30px"></div>
<div class="a b" style="left:1271px;top:608px;width:27px;height:30px"></div>
<svg class="a" style="left:1211px;top:608px" width="88" height="30" fill="none" stroke="#000">
<rect x="7" y="7" width="15" height="17"/><path d="M14 10a3 3 0 0 1 1 7v3M13 10a3 3 0 0 0 1 7"/>
<rect x="37" y="7" width="15" height="17"/><path d="M41 9h6l-5 6h7l-2 7h-6" stroke-width=".8"/>
<rect x="67" y="7" width="15" height="17"/><path d="M71 10h7l-2 5 2 6H71l2-6z" stroke-width=".8"/><path d="M69 9l12 14M81 9L69 23" stroke="#e00" stroke-width="1.8"/>
</svg>
<div class="a" style="left:1425px;top:607px;width:202px;height:32px;background:#000"></div>
<div class="a l" style="left:1425px;top:607px;width:87px;height:32px"></div>
<div class="a l" style="left:1514px;top:607px;width:113px;height:32px"></div>
<div class="a b m" style="left:1427px;top:609px;width:83px;height:27px;line-height:28px;padding-left:11px">ml/my</div>
<div class="a mb" style="left:1493px;top:621px"></div>
<div class="a b m" style="left:1517px;top:609px;width:108px;height:27px;line-height:28px;padding-left:7px">Regular</div>
<div class="a mb" style="left:1606px;top:621px"></div>
<div class="a" style="left:865px;top:639px;width:764px;height:2px;background:#000"></div>
<div class="a" style="left:865px;top:643px;width:764px;height:1px;background:#a5ecd8"></div>
<div class="a b m c" style="left:1080px;top:646px;width:128px;height:31px;line-height:31px">Combine Tools</div>
<div class="a l" style="left:1209px;top:645px;width:418px;height:33px"></div>
<div class="a m" style="left:1221px;top:654px">Merge Tools :</div>
<div class="a b m" style="left:1355px;top:647px;width:213px;height:28px;line-height:29px;padding-left:6px">Update Tools Numbers</div>
<div class="a mb" style="left:1550px;top:659px"></div>
<div class="a b m c" style="left:1572px;top:647px;width:54px;height:28px;line-height:29px">Merge</div>
<div class="a" style="left:865px;top:677px;width:764px;height:2px;background:#000"></div>
<div class="a l" style="left:865px;top:679px;width:764px;height:27px"></div>
<div class="a b m c" style="left:866px;top:680px;width:188px;height:25px;line-height:25px">Apply</div>
<div class="a b m c" style="left:1058px;top:680px;width:187px;height:25px;line-height:25px">Calc Drills</div>
<div class="a b m c" style="left:1249px;top:680px;width:186px;height:25px;line-height:25px">Update Table</div>
<div class="a b m c" style="left:1438px;top:680px;width:189px;height:25px;line-height:25px">Close</div>

</body></html>
